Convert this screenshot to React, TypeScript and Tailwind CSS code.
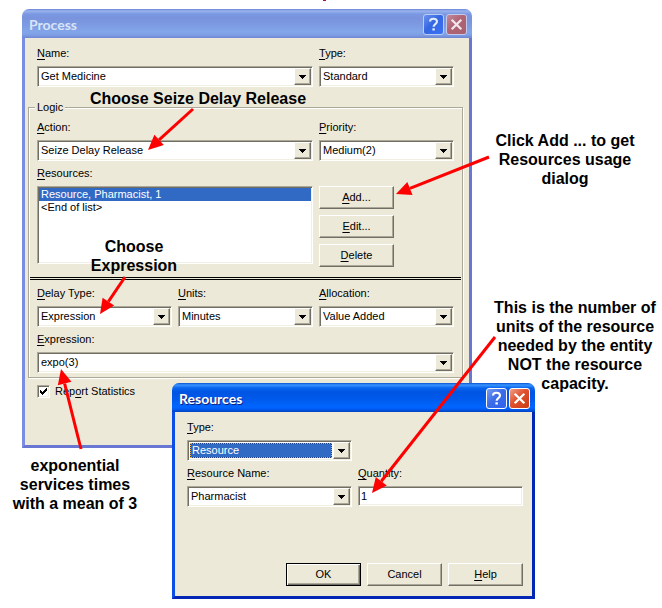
import React from "react";

const sunken =
  "border border-t-[#aca899] border-l-[#aca899] border-r-white border-b-white bg-white shadow-[inset_1px_1px_#716f64,inset_-1px_-1px_#f1efe2]";
const raised =
  "border border-t-white border-l-white border-r-[#716f64] border-b-[#716f64] bg-[#ece9d8] shadow-[inset_-1px_-1px_#aca899]";

/** Label text whose access key is underlined. */
function Mnemonic({ text, at = 0 }: { text: string; at?: number }) {
  return (
    <span>
      {text.slice(0, at)}
      <span className="underline underline-offset-2">{text[at]}</span>
      {text.slice(at + 1)}
    </span>
  );
}

type ComboProps = {
  id: string;
  label: string;
  value: string;
  wide?: string;
  focused?: boolean;
};

function Combo({ id, label, value, wide = "", focused = false }: ComboProps) {
  return (
    <div className={"flex flex-col gap-1.5 " + wide}>
      <label htmlFor={id}>
        <Mnemonic text={label} />
      </label>
      <div className={"grid h-[21px] p-px " + sunken}>
        <select
          id={id}
          defaultValue={value}
          className={
            "col-start-1 row-start-1 h-[17px] min-w-0 appearance-none pl-0.5 leading-[15px] outline-none " +
            (focused
              ? "mr-[17px] border border-white bg-[#316ac5] text-white shadow-[inset_0_0_0_1px_#1c3f7a]"
              : "bg-transparent text-black")
          }
        >
          <option>{value}</option>
        </select>
        {focused && (
          <span className="pointer-events-none col-start-1 row-start-1 m-px mr-[18px] border border-dotted border-[#f0a94a]" />
        )}
        <span
          className={
            "pointer-events-none col-start-1 row-start-1 flex h-[17px] w-[17px] items-center justify-center justify-self-end " +
            raised
          }
        >
          <svg width="7" height="4" viewBox="0 0 7 4" shapeRendering="crispEdges">
            <path d="M0 0h7v1H0zM1 1h5v1H1zM2 2h3v1H2zM3 3h1v1H3z" fill="#000" />
          </svg>
        </span>
      </div>
    </div>
  );
}

function PushButton({ text, access, isDefault = false }: { text: string; access?: number; isDefault?: boolean }) {
  return (
    <button
      type="button"
      className={
        "flex h-[23px] w-[75px] items-center justify-center " +
        (isDefault
          ? "border border-black bg-[#ece9d8] shadow-[inset_1px_1px_#ffffff,inset_-1px_-1px_#716f64,inset_-2px_-2px_#aca899]"
          : raised)
      }
    >
      {access === undefined ? text : <Mnemonic text={text} at={access} />}
    </button>
  );
}

function TitleBar({ title, active }: { title: string; active: boolean }) {
  const glyph =
    "flex h-[21px] w-[21px] items-center justify-center rounded-[3px] border ";
  return (
    <header
      className={
        "flex h-[29px] items-center rounded-t-[7px] pr-[5px] pl-[7px] " +
        (active
          ? "bg-[linear-gradient(#0a4fd0_0px,#3a95ff_2px,#0a64ee_5px,#0055e2_9px,#0058ea_15px,#0066ff_24px,#005df5_26px,#0042c0_29px)]"
          : "bg-[linear-gradient(#6a84d4_0px,#9ab4ee_2px,#7c98e2_5px,#7a93dd_9px,#7c99e2_15px,#82a6e9_23px,#7e9ee4_26px,#6f86d3_29px)]")
      }
    >
      <h2
        className={
          "flex-1 pt-0.5 font-['Lato',sans-serif] text-sm font-bold " +
          (active ? "text-white [text-shadow:1px_1px_#0f1f7d]" : "text-[#d8e4f8]")
        }
      >
        {title}
      </h2>
      <div className="flex gap-0.5 pt-0.5">
        <button
          type="button"
          aria-label="Help"
          className={
            glyph +
            (active
              ? "border-white bg-[linear-gradient(135deg,#7a9bf0,#3c6ce8_45%,#2f62f0)]"
              : "border-[#b9cdf5] bg-[linear-gradient(135deg,#6b93ee,#3567e2_45%,#3a72f2)]")
          }
        >
          <svg width="19" height="19" viewBox="0 0 19 19" fill="none">
            <path
              d="M6 6.6C6 4.6 7.4 3.7 9.4 3.7c2.1 0 3.6 1 3.6 2.8 0 2.6-3.4 2.5-3.4 5.2"
              stroke={active ? "#fff" : "#e3ecff"}
              strokeWidth="2.1"
            />
            <path d="M8.4 13.3h2.4v2.2H8.4z" fill={active ? "#fff" : "#e3ecff"} />
          </svg>
        </button>
        <button
          type="button"
          aria-label="Close"
          className={
            glyph +
            (active
              ? "border-white bg-[linear-gradient(135deg,#f0a088,#e0502c_45%,#c83c14)]"
              : "border-[#c5c9ea] bg-[linear-gradient(135deg,#c08a9c,#b06474_45%,#a9606e)]")
          }
        >
          <svg width="19" height="19" viewBox="0 0 19 19" fill="none">
            <path d="M4.7 4.7l9.6 9.6M14.3 4.7l-9.6 9.6" stroke={active ? "#fff" : "#efe6ee"} strokeWidth="2.3" />
          </svg>
        </button>
      </div>
    </header>
  );
}

function ProcessWindow() {
  return (
    <section className="absolute top-[9px] left-[22px] flex w-[450px] flex-col">
      <TitleBar title="Process" active={false} />
      <div className="border-[3px] border-t-0 border-l-[#7b8de0] border-r-[#6a77d2] border-b-[#6a77d2] bg-[#ece9d8] pt-[9px] pb-[47px]">
        <div className="grid grid-cols-3 gap-1.5 pr-[15px] pl-3">
          <Combo id="name" label="Name:" value="Get Medicine" wide="col-span-2" />
          <Combo id="type" label="Type:" value="Standard" />
        </div>
        <fieldset className="mt-3.5 mr-1.5 ml-[3px] border border-[#aca899] shadow-[1px_1px_#ffffff,inset_1px_1px_#ffffff]">
          <legend className="ml-1.5 bg-[#ece9d8] px-0.5">Logic</legend>
          <div className="grid grid-cols-3 gap-1.5 px-2 pt-[7px] pb-2.5">
            <Combo id="action" label="Action:" value="Seize Delay Release" wide="col-span-2" />
            <Combo id="priority" label="Priority:" value="Medium(2)" />
            <div className="col-span-2 flex flex-col gap-1.5">
              <label htmlFor="resources">
                <Mnemonic text="Resources:" />
              </label>
              <div className={"h-[78px] p-px " + sunken}>
                <ul id="resources" role="listbox" aria-label="Resources">
                  <li role="option" aria-selected="true" className="bg-[#316ac5] pl-0.5 text-white">
                    Resource, Pharmacist, 1
                  </li>
                  <li role="option" aria-selected="false" className="pl-0.5">
                    &lt;End of list&gt;
                  </li>
                </ul>
              </div>
            </div>
            <div className="flex flex-col gap-1.5 pt-[19px]">
              <PushButton text="Add..." access={0} />
              <PushButton text="Edit..." access={0} />
              <PushButton text="Delete" access={0} />
            </div>
          </div>
          <hr className="mx-px border-t-[3px] border-double border-black" />
          <div className="grid grid-cols-3 gap-1.5 px-2 pt-[7px] pb-1">
            <Combo id="delay" label="Delay Type:" value="Expression" />
            <Combo id="units" label="Units:" value="Minutes" />
            <Combo id="allocation" label="Allocation:" value="Value Added" />
            <Combo id="expression" label="Expression:" value="expo(3)" wide="col-span-3" />
          </div>
        </fieldset>
        <label className="mt-[7px] flex items-center gap-[5px] pl-3">
          <span className="grid">
            <input
              type="checkbox"
              defaultChecked
              className={"col-start-1 row-start-1 h-[13px] w-[13px] appearance-none " + sunken}
            />
            <svg
              className="pointer-events-none col-start-1 row-start-1"
              width="13"
              height="13"
              viewBox="0 0 13 13"
              shapeRendering="crispEdges"
            >
              <path d="M3 5h1v3H3zM4 6h1v3H4zM5 7h1v3H5zM6 6h1v3H6zM7 5h1v3H7zM8 4h1v3H8zM9 3h1v3H9z" fill="#000" />
            </svg>
          </span>
          <Mnemonic text="Report Statistics" at={3} />
        </label>
      </div>
    </section>
  );
}

function ResourcesWindow() {
  return (
    <section className="absolute top-[383px] left-[172px] flex w-[363px] flex-col">
      <TitleBar title="Resources" active />
      <div className="border-[3px] border-t-0 border-l-[#0b4fe6] border-r-[#0426b4] border-b-[#0426b4] bg-[#ece9d8] pt-[9px] pr-[9px] pb-2.5 pl-3">
        <div className="grid grid-cols-2 gap-1.5">
          <Combo id="res-type" label="Type:" value="Resource" focused />
          <div />
          <Combo id="res-name" label="Resource Name:" value="Pharmacist" />
          <div className="flex flex-col gap-1.5">
            <label htmlFor="quantity">
              <Mnemonic text="Quantity:" />
            </label>
            <input id="quantity" type="text" defaultValue="1" className={"h-5 w-full pl-0.5 outline-none " + sunken} />
          </div>
        </div>
        <div className="mt-14 flex justify-end gap-1.5">
          <PushButton text="OK" isDefault />
          <PushButton text="Cancel" />
          <PushButton text="Help" access={0} />
        </div>
      </div>
    </section>
  );
}

type Point = [number, number];

/** Red callout arrow from a note to the control it describes. */
function Arrow({ from, to }: { from: Point; to: Point }) {
  const dx = to[0] - from[0];
  const dy = to[1] - from[1];
  const len = Math.hypot(dx, dy);
  const ux = dx / len;
  const uy = dy / len;
  const bx = to[0] - ux * 15;
  const by = to[1] - uy * 15;
  return (
    <g>
      <line x1={from[0]} y1={from[1]} x2={bx} y2={by} stroke="#f00" strokeWidth="3" />
      <polygon
        points={`${to[0]},${to[1]} ${bx - uy * 7},${by + ux * 7} ${bx + uy * 7},${by - ux * 7}`}
        fill="#f00"
      />
    </g>
  );
}

function Note({ place, lines }: { place: string; lines: string[] }) {
  return (
    <p
      className={
        "absolute flex flex-col text-center text-base leading-[19px] font-bold whitespace-nowrap " + place
      }
    >
      {lines.map((line) => (
        <span key={line}>{line}</span>
      ))}
    </p>
  );
}

export default function App() {
  return (
    <main className="relative min-h-screen overflow-hidden bg-white font-['Liberation_Sans',Arial,sans-serif] text-[11px] leading-[13px] text-black">
      <span className="absolute top-0 left-[323px] h-px w-[3px] bg-[#a0105a]" />
      <ProcessWindow />
      <ResourcesWindow />
      <Note place="top-[89px] left-[88px] w-[220px]" lines={["Choose Seize Delay Release"]} />
      <Note place="top-[237px] left-[84px] w-[100px]" lines={["Choose", "Expression"]} />
      <Note place="top-[131px] left-[490px] w-[150px]" lines={["Click Add ... to get", "Resources usage", "dialog"]} />
      <Note
        place="top-[298px] left-[490px] w-[170px]"
        lines={[
          "This is the number of",
          "units of the resource",
          "needed by the entity",
          "NOT the resource",
          "capacity.",
        ]}
      />
      <Note
        place="top-[456px] left-[5px] w-[140px]"
        lines={["exponential", "services times", "with a mean of 3"]}
      />
      <svg
        className="pointer-events-none absolute top-0 left-0"
        width="662"
        height="608"
        viewBox="0 0 662 608"
      >
        <Arrow from={[193, 109]} to={[148, 150]} />
        <Arrow from={[489, 157]} to={[396, 194]} />
        <Arrow from={[125, 277]} to={[100, 314]} />
        <Arrow from={[81, 449]} to={[61, 369]} />
        <Arrow from={[495, 337]} to={[372, 493]} />
      </svg>
    </main>
  );
}
